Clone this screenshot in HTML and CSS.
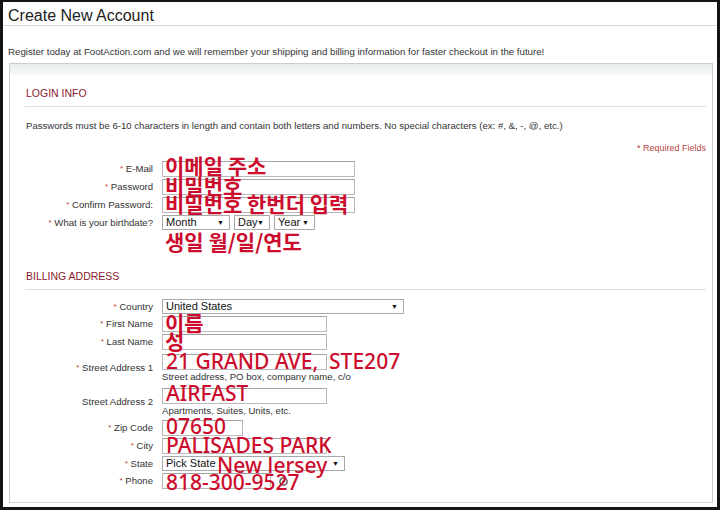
FILE: index.html
```html
<!DOCTYPE html>
<html lang="en">
<head>
  <meta charset="UTF-8" />
  <title>Create New Account</title>
  <link rel="stylesheet" href="styles.css">
</head>
<body>
  <div class="frame">
    <h1 class="page-title">Create New Account</h1>
    <p class="intro">Register today at FootAction.com and we will remember your shipping and billing information for faster checkout in the future!</p>

    <div class="panel">
      <div class="panel-band"></div>
      <div class="panel-body">

        <!-- login info -->
        <h2 class="section-title">LOGIN INFO</h2>
        <p class="note">Passwords must be 6-10 characters in length and contain both letters and numbers. No special characters (ex: #, &amp;, -, @, etc.)</p>
        <p class="required">* Required Fields</p>

        <div class="form-grid">
          <label class="field-label"><span class="req">*</span> E-Mail</label>
          <div class="field">
            <input class="text-input w-long" type="text">
            <span class="memo memo-ko memo-email">이메일 주소</span>
          </div>

          <label class="field-label"><span class="req">*</span> Password</label>
          <div class="field">
            <input class="text-input w-long" type="password">
            <span class="memo memo-ko">비밀번호</span>
          </div>

          <label class="field-label"><span class="req">*</span> Confirm Password:</label>
          <div class="field">
            <input class="text-input w-long" type="password">
            <span class="memo memo-ko">비밀번호 한번더 입력</span>
          </div>

          <label class="field-label"><span class="req">*</span> What is your birthdate?</label>
          <div class="field select-row">
            <span class="select-wrap w-month"><select class="select"><option>Month</option></select></span>
            <span class="select-wrap w-day"><select class="select"><option>Day</option></select></span>
            <span class="select-wrap w-year"><select class="select"><option>Year</option></select></span>
          </div>

          <div class="field memo-line">생일 월/일/연도</div>
        </div>

        <!-- billing address -->
        <h2 class="section-title billing">BILLING ADDRESS</h2>

        <div class="form-grid billing-grid">
          <label class="field-label"><span class="req">*</span> Country</label>
          <div class="field">
            <span class="select-wrap w-country"><select class="select"><option>United States</option></select></span>
          </div>

          <label class="field-label"><span class="req">*</span> First Name</label>
          <div class="field">
            <input class="text-input w-mid" type="text">
            <span class="memo memo-ko memo-flush">이름</span>
          </div>

          <label class="field-label"><span class="req">*</span> Last Name</label>
          <div class="field">
            <input class="text-input w-mid" type="text">
            <span class="memo memo-ko memo-flush">성</span>
          </div>

          <label class="field-label"><span class="req">*</span> Street Address 1</label>
          <div class="field field-hinted">
            <input class="text-input w-mid" type="text">
            <span class="hint">Street address, PO box, company name, c/o</span>
            <span class="memo memo-en memo-street">21 GRAND AVE,&nbsp; STE207</span>
          </div>

          <label class="field-label">Street Address 2</label>
          <div class="field field-hinted">
            <input class="text-input w-mid" type="text">
            <span class="hint">Apartments, Suites, Units, etc.</span>
            <span class="memo memo-en memo-high">AIRFAST</span>
          </div>

          <label class="field-label"><span class="req">*</span> Zip Code</label>
          <div class="field">
            <input class="text-input w-zip" type="text">
            <span class="memo memo-en memo-zip">07650</span>
          </div>

          <label class="field-label"><span class="req">*</span> City</label>
          <div class="field">
            <input class="text-input w-mid" type="text">
            <span class="memo memo-en memo-city">PALISADES PARK</span>
          </div>

          <label class="field-label"><span class="req">*</span> State</label>
          <div class="field">
            <span class="select-wrap w-state"><select class="select"><option>Pick State</option></select></span>
            <span class="memo memo-en memo-state">New Jersey</span>
          </div>

          <label class="field-label"><span class="req">*</span> Phone</label>
          <div class="field phone-row">
            <input class="text-input w-phone" type="text">
            <svg class="help-icon" width="9" height="9" viewBox="0 0 9 9">
              <circle cx="4.5" cy="4.5" r="3.6" fill="none" stroke="#444" stroke-width="1.3"/>
              <circle cx="4.5" cy="4.5" r="1.2" fill="#444"/>
            </svg>
            <span class="memo memo-en memo-phone">818-300-9527</span>
          </div>
        </div>

      </div>
    </div>
  </div>
</body>
</html>
```

FILE: styles.css
```css
html, body {
  margin: 0;
  padding: 0;
  background: #111;
}

body {
  font-family: 'Liberation Sans', Arial, sans-serif;
  color: #333;
}

.frame {
  box-sizing: border-box;
  width: 720px;
  height: 510px;
  background: #fff;
  border: 3px solid #141414;
  border-top-width: 2px;
  overflow: hidden;
}

.page-title {
  margin: 0;
  padding: 5px 0 0 5px;
  height: 18px;
  font-size: 16px;
  line-height: 18px;
  font-weight: normal;
  color: #222;
  border-bottom: 1px solid #d8d8d8;
}

.intro {
  margin: 20px 0 0 5px;
  font-size: 9.7px;
  line-height: 12px;
  color: #333;
}

.panel {
  margin: 5px 4px 0 6px;
  border: 1px solid #cdcdcd;
  border-bottom-color: #d6d6d6;
}

.panel-band {
  height: 11px;
  background: linear-gradient(#e8edea, #f7f9f8);
}

.panel-body {
  padding: 0 6px 13px 15px;
}

.section-title {
  margin: 12px 0 0;
  padding: 0 0 6px 1px;
  font-size: 10.5px;
  line-height: 13px;
  font-weight: normal;
  color: #8c1b2e;
  border-bottom: 1px solid #dedede;
}

.section-title.billing {
  margin-top: 19px;
}

.note {
  margin: 13px 0 0 1px;
  font-size: 9.6px;
  line-height: 12px;
}

.required {
  margin: 11px 0 0;
  text-align: right;
  font-size: 9px;
  line-height: 10px;
  color: #b3453f;
}

.form-grid {
  display: grid;
  grid-template-columns: 128px 1fr;
  column-gap: 9px;
  row-gap: 2px;
  align-items: center;
  margin-top: 8px;
}

.billing-grid {
  margin-top: 9px;
}

.field-label {
  text-align: right;
  font-size: 9.6px;
  line-height: 12px;
  color: #333;
}

.req {
  color: #c0392b;
  font-size: 8px;
  vertical-align: 1px;
}

.field {
  position: relative;
  display: flex;
  align-items: center;
}

.field-hinted {
  flex-direction: column;
  align-items: flex-start;
  padding: 2px 0;
}

.hint {
  font-size: 9.6px;
  line-height: 11px;
  margin-top: 1px;
  color: #333;
}

.text-input {
  box-sizing: border-box;
  height: 16px;
  margin: 0;
  padding: 0 3px;
  border: 1px solid #b9b9b9;
  border-top-color: #a4a4a4;
  background: #fff;
  font-size: 11px;
}

.w-long { width: 193px; }
.w-mid { width: 165px; }
.w-zip { width: 81px; }
.w-phone { width: 109px; }

.select-row {
  gap: 4px;
}

.select-wrap {
  position: relative;
  display: block;
  height: 15px;
}

.select-wrap::after {
  content: "▼";
  position: absolute;
  right: 6px;
  top: 3px;
  font-size: 7px;
  line-height: 9px;
  color: #111;
  pointer-events: none;
}

.select {
  appearance: none;
  -webkit-appearance: none;
  display: block;
  box-sizing: border-box;
  width: 100%;
  height: 15px;
  margin: 0;
  padding: 0 0 0 3px;
  border: 1px solid #a9a9a9;
  border-radius: 0;
  background: #fff;
  font-family: 'Liberation Sans', Arial, sans-serif;
  font-size: 11px;
  line-height: 13px;
  color: #111;
}

.w-month { width: 68px; }
.w-day { width: 36px; }
.w-year { width: 41px; }
.w-country { width: 242px; }
.w-state { width: 183px; }

.phone-row .help-icon {
  margin-left: 8px;
}

/* red hand-written notes laid over the form */
.memo {
  position: absolute;
  left: 3px;
  top: -4px;
  white-space: nowrap;
  color: #cc0c2c;
  pointer-events: none;
}

.memo-ko {
  font-family: 'Noto Sans CJK KR', sans-serif;
  font-weight: bold;
  font-size: 21px;
  line-height: 21px;
}

.memo-email { top: -6px; }
.memo-flush { top: -4px; }

.memo-en {
  left: 4px;
  font-family: 'Noto Sans', sans-serif;
  font-weight: 500;
  font-size: 21px;
  line-height: 21px;
}

.memo-street { top: -1px; }
.memo-high { top: -3px; }
.memo-zip { top: -4px; }
.memo-city { top: -3px; }
.memo-state { left: 55px; top: -1px; }
.memo-phone { top: -1px; }

.memo-line {
  grid-column: 2;
  height: 20px;
  margin-top: -1px;
  padding-left: 3px;
  font-family: 'Noto Sans CJK KR', sans-serif;
  font-weight: bold;
  font-size: 21px;
  line-height: 20px;
  color: #cc0c2c;
}
```
